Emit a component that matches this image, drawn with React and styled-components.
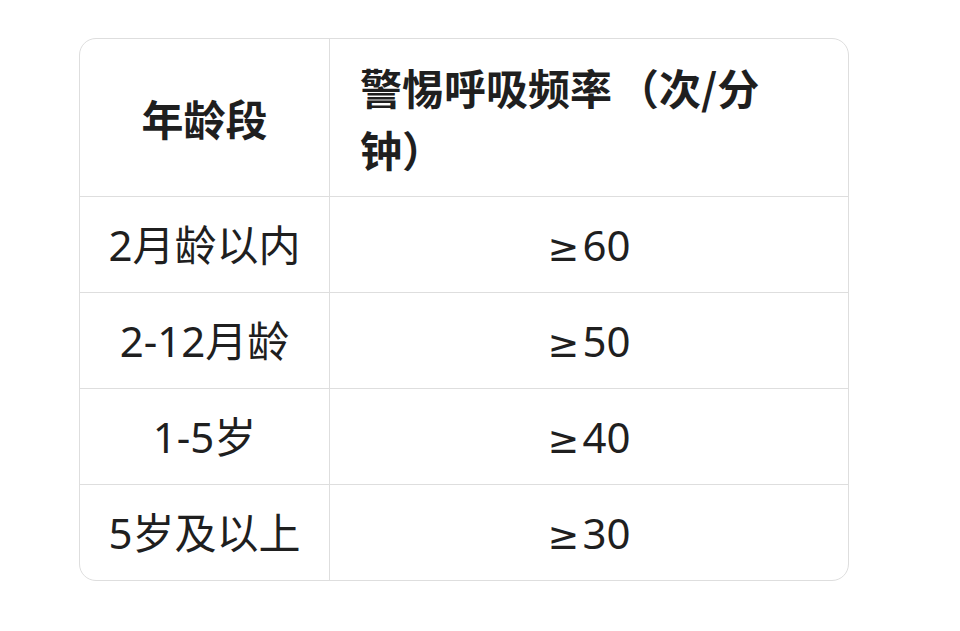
import React from "react";
import styled, { createGlobalStyle } from "styled-components";

const Global = createGlobalStyle`
  html, body { margin: 0; padding: 0; background: #ffffff; }
  body { font-family: "Noto Sans", "Noto Sans CJK SC", sans-serif; color: #1f1f1f; }
`;

const Page = styled.div`
  width: 960px;
  height: 631px;
  box-sizing: border-box;
  padding: 38px 0 0 79px;
  background: #ffffff;
`;

const Table = styled.table`
  width: 770px;
  border-collapse: separate;
  border-spacing: 0;
  border: 1.5px solid #dedede;
  border-radius: 17px;
  overflow: hidden;
  table-layout: fixed;
  font-size: 42px;
  line-height: 62px;
`;

const Cell = styled.td`
  padding: 16.5px ${(p) => (p.$left ? "16px 16.5px 30px" : "10px")};
  text-align: ${(p) => (p.$left ? "left" : "center")};
  font-family: ${(p) =>
    p.$head ? '"Noto Sans CJK SC", sans-serif' : '"Noto Sans", "Noto Sans CJK SC", sans-serif'};
  font-weight: ${(p) => (p.$head ? 700 : 400)};
  border-right: ${(p) => (p.$last ? "none" : "1.5px solid #dedede")};
  border-bottom: ${(p) => (p.$bottom ? "none" : "1.5px solid #dedede")};
  vertical-align: middle;
  color: #1f1f1f;
`;

const NoWrap = styled.span`
  white-space: nowrap;
  padding-left: 5px;
`;

const Sym = styled.span`
  font-family: "DejaVu Sans", "Liberation Sans", sans-serif;
  font-size: 38px;
  line-height: 1;
  margin-right: 3px;
`;

const rows = [
  ["2月龄以内", "60"],
  ["2-12月龄", "50"],
  ["1-5岁", "40"],
  ["5岁及以上", "30"],
];

export default function App() {
  return (
    <>
      <Global />
      <Page>
        <Table>
          <colgroup>
            <col style={{ width: "250px" }} />
            <col />
          </colgroup>
          <thead>
            <tr>
              <Cell as="th" $head>年龄段</Cell>
              <Cell as="th" $head $left $last>
                警惕呼吸频率<NoWrap>（次/分</NoWrap>钟）
              </Cell>
            </tr>
          </thead>
          <tbody>
            {rows.map(([a, b], i) => (
              <tr key={a}>
                <Cell $bottom={i === rows.length - 1}>{a}</Cell>
                <Cell $last $bottom={i === rows.length - 1}>
                  <Sym>≥</Sym>
                  {b}
                </Cell>
              </tr>
            ))}
          </tbody>
        </Table>
      </Page>
    </>
  );
}
